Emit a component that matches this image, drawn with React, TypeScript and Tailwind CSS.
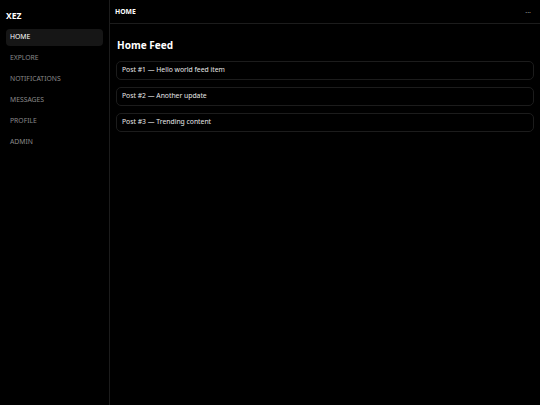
const nav = ['HOME', 'EXPLORE', 'NOTIFICATIONS', 'MESSAGES', 'PROFILE', 'ADMIN']

const posts = [
  'Post #1 — Hello world feed item',
  'Post #2 — Another update',
  'Post #3 — Trending content',
]

export default function App() {
  return (
    <div
      className="flex h-[405px] w-[540px] overflow-hidden bg-black text-white antialiased"
      style={{ fontFamily: '"Noto Sans", "Open Sans", sans-serif' }}
    >
      {/* Sidebar */}
      <aside className="flex w-[110px] shrink-0 flex-col border-r border-[#1c1c1c] px-[6px]">
        <div className="pt-[11px] pb-[8px] text-[8.5px] leading-[10px] font-bold">XEZ</div>
        <nav className="flex flex-col gap-[4px]">
          {nav.map((item, i) => (
            <div
              key={item}
              className={
                i === 0
                  ? 'flex h-[17px] items-center rounded-[4px] bg-[#161616] px-[4px] text-[6.8px] text-white'
                  : 'flex h-[17px] items-center px-[4px] text-[6.8px] text-[#8a8a8a]'
              }
            >
              {item}
            </div>
          ))}
        </nav>
      </aside>

      {/* Main */}
      <div className="flex flex-1 flex-col">
        <header className="flex h-[24px] items-center justify-between border-b border-[#1c1c1c] pr-[9px] pl-[5px]">
          <span className="pt-[1px] text-[6.8px] font-bold">HOME</span>
          <span className="pt-[1px] text-[7px] leading-none text-[#9a9a9a]">···</span>
        </header>
        <main className="px-[6px] pt-[14px]">
          <h1 className="mb-[9px] pl-[1px] text-[10px] leading-[14px] font-bold">Home Feed</h1>
          <div className="flex flex-col gap-[7px]">
            {posts.map((p) => (
              <div
                key={p}
                className="flex h-[19px] items-center rounded-[5px] border border-[#1c1c1c] px-[5px] text-[6.8px] text-[#e8e8e8]"
              >
                {p}
              </div>
            ))}
          </div>
        </main>
      </div>
    </div>
  )
}
